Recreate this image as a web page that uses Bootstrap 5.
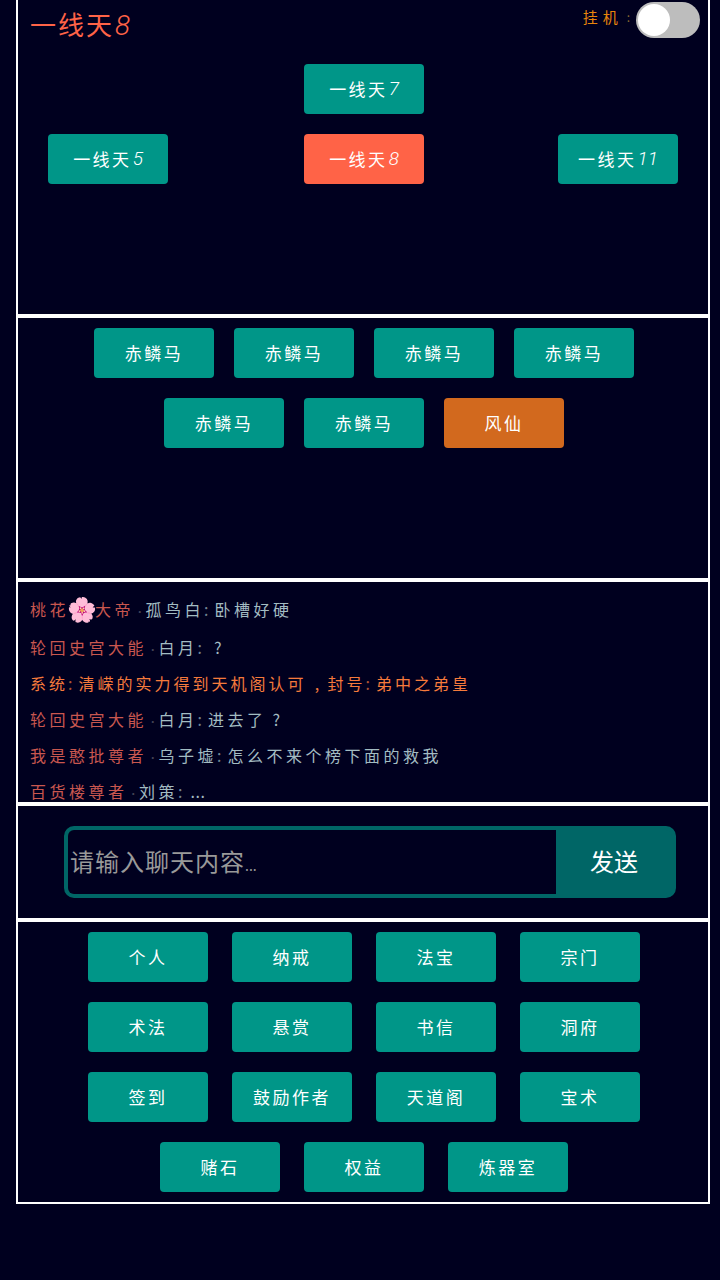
<!DOCTYPE html>
<html lang="zh"><head><meta charset="utf-8">
<link href="https://cdn.jsdelivr.net/npm/bootstrap@5.3.0/dist/css/bootstrap.min.css" rel="stylesheet">
<style>
html,body{background:#00001f;height:1280px;overflow:hidden}
body{font-family:"Noto Sans CJK SC","Liberation Sans",sans-serif;color:#fff;margin:0}
.frame{width:694px;margin-left:16px;border:2px solid #fff;border-top:0}
.sect{border-bottom:4px solid #fff;position:relative}
.sect:last-child{border-bottom:0}
.s1{height:318px}.s2{height:264px;padding:10px 74px 0 76px}.s3{height:224px;overflow:hidden;padding-top:8px}.s4{height:116px;padding-top:20px}.s5{height:280px;padding:10px 68px 0 70px}
.title{font-size:26px;color:#ff6347;letter-spacing:2px;line-height:36px;height:44px;padding:6px 0 0 12px}
.title .numb{font-size:28px;letter-spacing:0;line-height:30px}
.tbtn{width:120px;height:50px;background:#009688;color:#fff;font-size:17px;letter-spacing:2.5px;line-height:1;border:0;border-radius:4px;padding:0 0 2px;display:flex;align-items:center;justify-content:center}
.tbtn:hover{background:#009688;color:#fff}
.tbtn.red,.tbtn.red:hover{background:#ff6347}.tbtn.org,.tbtn.org:hover{background:#d2691e}
.numb{font-family:Roboto,"Liberation Sans",sans-serif;font-weight:300;font-style:italic;letter-spacing:0;font-size:19px;margin-left:1px}
.hang{position:absolute;top:2px;right:8px;height:36px;display:flex;align-items:center;gap:6px;color:#e8850c;font-size:15px;letter-spacing:5px}
.hang .lbl{margin-top:-6px;margin-left:-2px}
.hang .cln{color:#8a6a30;letter-spacing:0;margin:-6px 0 0 -2px;font-size:12px}
.sw{width:64px;height:36px;border-radius:18px;background:#bdbdbd;position:relative}
.sw::after{content:"";position:absolute;left:2px;top:2px;width:32px;height:32px;border-radius:50%;background:#fff}
.r1{margin-top:20px;padding-left:286px}
.r2{margin-top:20px;padding-left:30px;gap:136px}
.r2 .tbtn:last-child{margin-left:-2px}
.msg{font-size:16px;letter-spacing:3.5px;line-height:36px;height:36px;padding-left:12px;white-space:nowrap;color:#a3bcc2}
.msg.one{height:39px;line-height:38px}
.who{color:#c9574f}.sys{color:#f57a3c;letter-spacing:3px}
.dot{display:inline-block;width:11.5px;text-align:center;font-size:10px;color:#445;letter-spacing:0}
.cl{letter-spacing:0;margin:0 6px 0 0;opacity:.7}
.cma{display:inline-block;width:21px;text-align:center;letter-spacing:0}
.flower{font-size:24px;line-height:1;vertical-align:-2px;letter-spacing:0;margin:0 -2px}
.q{margin-left:6px}
.ell{letter-spacing:.5px;margin-left:2px}
.chat{margin:0 32px 0 46px;height:72px;border:4px solid #006666;border-radius:10px;overflow:hidden;background:#006666}
.inp{flex:1;background:#00001f;color:#999;font-size:24px;padding:0 0 2px 2px;letter-spacing:1px}
.inp i{font-style:normal;font-size:14px;letter-spacing:0;align-self:flex-end;margin-bottom:16px}
.snd{width:116px;font-size:24px;letter-spacing:0;color:#fff;padding-bottom:2px}
.g20{gap:20px}
.g24{gap:20px 24px}
</style></head><body>
<div class="frame">
 <section class="sect s1">
  <div class="title">一线天<span class="numb">8</span></div>
  <div class="hang"><span class="lbl">挂机</span><span class="cln">:</span><span class="sw"></span></div>
  <div class="d-flex r1"><button class="btn tbtn">一线天<span class="numb">7</span></button></div>
  <div class="d-flex r2"><button class="btn tbtn">一线天<span class="numb">5</span></button><button class="btn tbtn red">一线天<span class="numb">8</span></button><button class="btn tbtn">一线天<span class="numb">11</span></button></div>
 </section>
 <section class="sect s2">
  <div class="d-flex flex-wrap justify-content-center g20"><button class="btn tbtn">赤鳞马</button><button class="btn tbtn">赤鳞马</button><button class="btn tbtn">赤鳞马</button><button class="btn tbtn">赤鳞马</button><button class="btn tbtn">赤鳞马</button><button class="btn tbtn">赤鳞马</button><button class="btn tbtn org">风仙</button></div>
 </section>
 <section class="sect s3">
  <div class="msg one"><span class="who">桃花<span class="flower">🌸</span>大帝</span><span class="dot">·</span>孤鸟白<span class="cl">:</span>卧槽好硬</div>
  <div class="msg"><span class="who">轮回史宫大能</span><span class="dot">·</span>白月<span class="cl">:</span><span class="q">?</span></div>
  <div class="msg sys">系统<span class="cl">:</span>清嵘的实力得到天机阁认可<span class="cma">,</span>封号<span class="cl">:</span>弟中之弟皇</div>
  <div class="msg"><span class="who">轮回史宫大能</span><span class="dot">·</span>白月<span class="cl">:</span>进去了<span class="q">?</span></div>
  <div class="msg"><span class="who">我是憨批尊者</span><span class="dot">·</span>乌子墟<span class="cl">:</span>怎么不来个榜下面的救我</div>
  <div class="msg"><span class="who">百货楼尊者</span><span class="dot">·</span>刘策<span class="cl">:</span><span class="ell">...</span></div>
 </section>
 <section class="sect s4">
  <div class="chat d-flex"><div class="inp d-flex align-items-center">请输入聊天内容<i>...</i></div><div class="snd d-flex align-items-center justify-content-center">发送</div></div>
 </section>
 <section class="sect s5">
  <div class="d-flex flex-wrap justify-content-center g24"><button class="btn tbtn">个人</button><button class="btn tbtn">纳戒</button><button class="btn tbtn">法宝</button><button class="btn tbtn">宗门</button><button class="btn tbtn">术法</button><button class="btn tbtn">悬赏</button><button class="btn tbtn">书信</button><button class="btn tbtn">洞府</button><button class="btn tbtn">签到</button><button class="btn tbtn">鼓励作者</button><button class="btn tbtn">天道阁</button><button class="btn tbtn">宝术</button><button class="btn tbtn">赌石</button><button class="btn tbtn">权益</button><button class="btn tbtn">炼器室</button></div>
 </section>
</div>
<script src="https://cdn.jsdelivr.net/npm/bootstrap@5.3.0/dist/js/bootstrap.bundle.min.js"></script>
</body></html>
